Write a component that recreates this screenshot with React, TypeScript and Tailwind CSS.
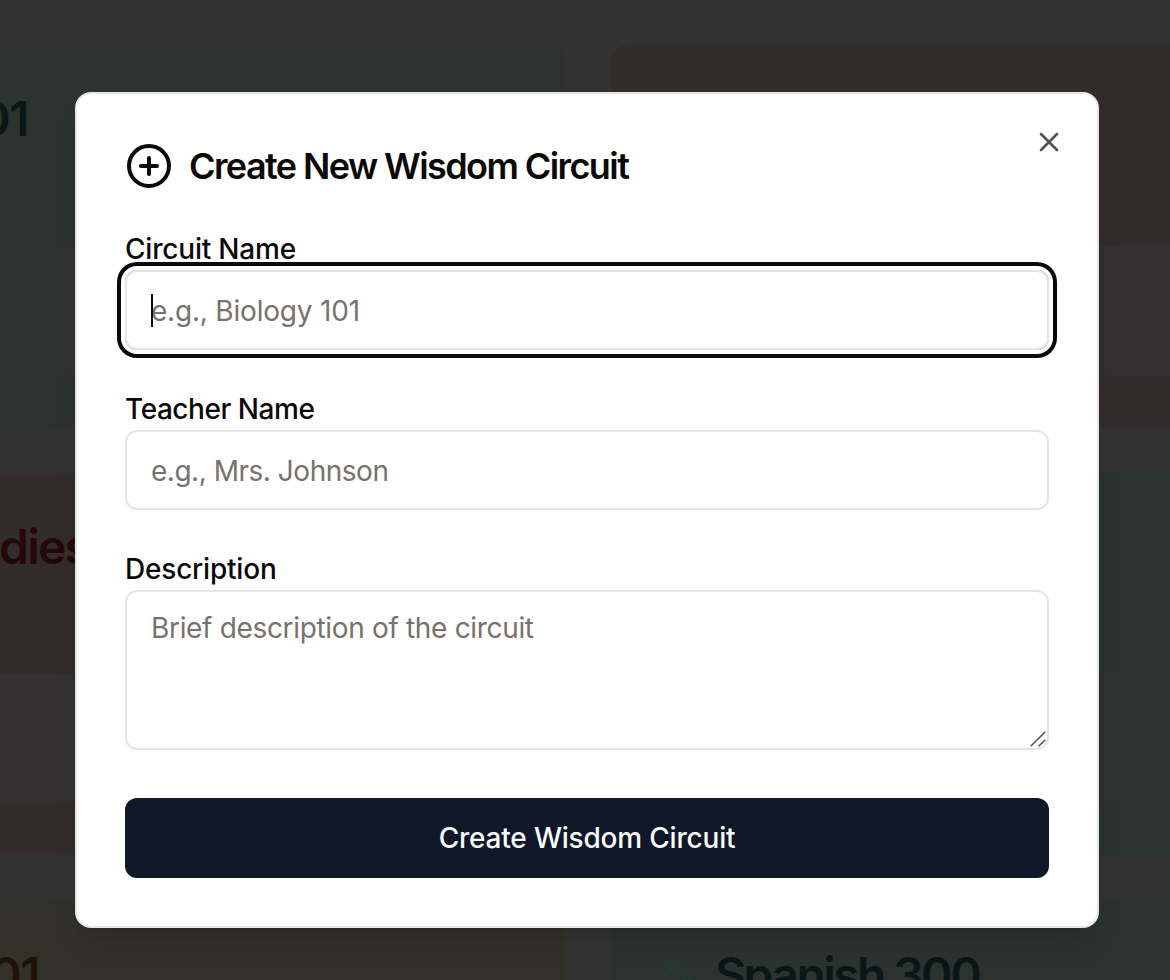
import React from "react";
import { CirclePlus, Languages, X } from "lucide-react";

type CardProps = {
  title: string;
  header: string;
  body: string;
  text: string;
  titleClass: string;
  icon?: React.ReactNode;
};

function CircuitCard({ title, header, body, text, titleClass, icon }: CardProps) {
  return (
    <div className={`h-[382px] shrink-0 overflow-hidden rounded-[16px] ${header}`}>
      <div className="flex h-[201px] items-start px-12 pt-[45px]">
        {icon}
        <div className={`whitespace-nowrap text-[48px] leading-[58px] font-semibold ${text} ${titleClass}`}>{title}</div>
      </div>
      <div className={`h-[129px] ${body}`} />
    </div>
  );
}

function Background() {
  return (
    <div className="absolute inset-0 flex gap-[47px] overflow-hidden bg-[#323232] pt-[45px]">
      <div className="-ml-6 flex w-[588px] shrink-0 flex-col gap-[46px]">
        <CircuitCard title="01" header="bg-[#2c3230]" body="bg-[#303232]" text="text-[#0b1716]" titleClass="ml-[-45px] tracking-[-1.5px]" />
        <CircuitCard title="dies" header="bg-[#322d2b]" body="bg-[#323031]" text="text-[#260808]" titleClass="ml-[-25px] tracking-[-1.8px]" />
        <CircuitCard title="01" header="bg-[#323129]" body="bg-[#323230]" text="text-[#1f1209]" titleClass="ml-[-34px] tracking-[-1.5px]" />
      </div>
      <div className="-mr-6 flex w-[630px] shrink-0 flex-col gap-[46px]">
        <CircuitCard title="" header="bg-[#322d2b]" body="bg-[#323031]" text="text-[#260808]" titleClass="" />
        <CircuitCard title="" header="bg-[#2c3230]" body="bg-[#303232]" text="text-[#0b1716]" titleClass="" />
        <CircuitCard
          title="Spanish 300"
          header="bg-[#2c3230]"
          body="bg-[#303232]"
          text="text-[#0b1716]"
          titleClass="ml-[16px] tracking-[-2.6px]"
          icon={<Languages className="mt-[6px] size-[40px] shrink-0 text-[#253834]" strokeWidth={2} />}
        />
      </div>
    </div>
  );
}

function Label({ children, className }: { children: React.ReactNode; className: string }) {
  return (
    <label className={`block h-[44px] self-start whitespace-nowrap text-[28px] leading-[46px] font-medium ${className}`}>{children}</label>
  );
}

const fieldClass =
  "block w-full rounded-[12px] border-2 border-[#e5e5e5] bg-white px-6 text-[28px] text-[#0c0a09] outline-none placeholder:text-[#78716c] placeholder:opacity-100";

export default function App() {
  return (
    <div className="relative h-[980px] w-[1170px] overflow-hidden font-['Inter',sans-serif]">
      <Background />
      <div className="relative flex pt-[92px] pl-[75px]">
        <div
          role="dialog"
          className="relative flex h-[836px] w-[1024px] flex-col rounded-[16px] border-2 border-[#e5e5e5] bg-white px-12 pt-12 text-[#0c0a09] shadow-[0_20px_30px_-6px_rgba(0,0,0,0.1),0_8px_12px_-8px_rgba(0,0,0,0.1)]"
        >
          <div className="flex h-[48px] items-center gap-4">
            <CirclePlus className="size-[48px]" strokeWidth={2} />
            <h2 className="whitespace-nowrap text-[36px] leading-[36px] font-semibold tracking-[-1.58px]">Create New Wisdom Circuit</h2>
          </div>
          <button className="absolute top-[32px] right-[32px] text-[#545353]" aria-label="Close">
            <X className="size-8" strokeWidth={2} />
          </button>
          <form className="flex flex-col pt-[36px]">
            <Label className="tracking-[-0.2px]">Circuit Name</Label>
            <div className="relative rounded-[12px] shadow-[0_0_0_4px_#fff,0_0_0_8px_#0c0a09]">
              <input className={`h-[80px] pt-[2px] tracking-[-0.2px] ${fieldClass}`} placeholder="e.g., Biology 101" />
              <span className="absolute top-[24px] left-[26px] h-[33px] w-[2px] bg-[#0c0a09]" />
            </div>
            <div className="h-[36px]" />
            <Label className="tracking-[-0.45px]">Teacher Name</Label>
            <input className={`h-[80px] pt-[2px] tracking-[-0.48px] ${fieldClass}`} placeholder="e.g., Mrs. Johnson" />
            <div className="h-[36px]" />
            <Label className="tracking-[-0.2px]">Description</Label>
            <div className="relative">
              <textarea
                className={`h-[160px] resize-none py-4 leading-[40px] tracking-[-0.33px] ${fieldClass}`}
                placeholder="Brief description of the circuit"
              />
              <svg className="absolute right-[3px] bottom-[3px] size-4" viewBox="0 0 16 16" fill="none" stroke="#555" strokeWidth="1.6">
                <path d="M.7 15.3 15.3.7M8.7 15.3 15.3 8.7" />
              </svg>
            </div>
            <button
              type="button"
              className="mt-12 h-[80px] rounded-[12px] bg-[#101729] text-[28px] font-medium tracking-[-0.2px] text-[#f8fafc]"
            >
              Create Wisdom Circuit
            </button>
          </form>
        </div>
      </div>
    </div>
  );
}
